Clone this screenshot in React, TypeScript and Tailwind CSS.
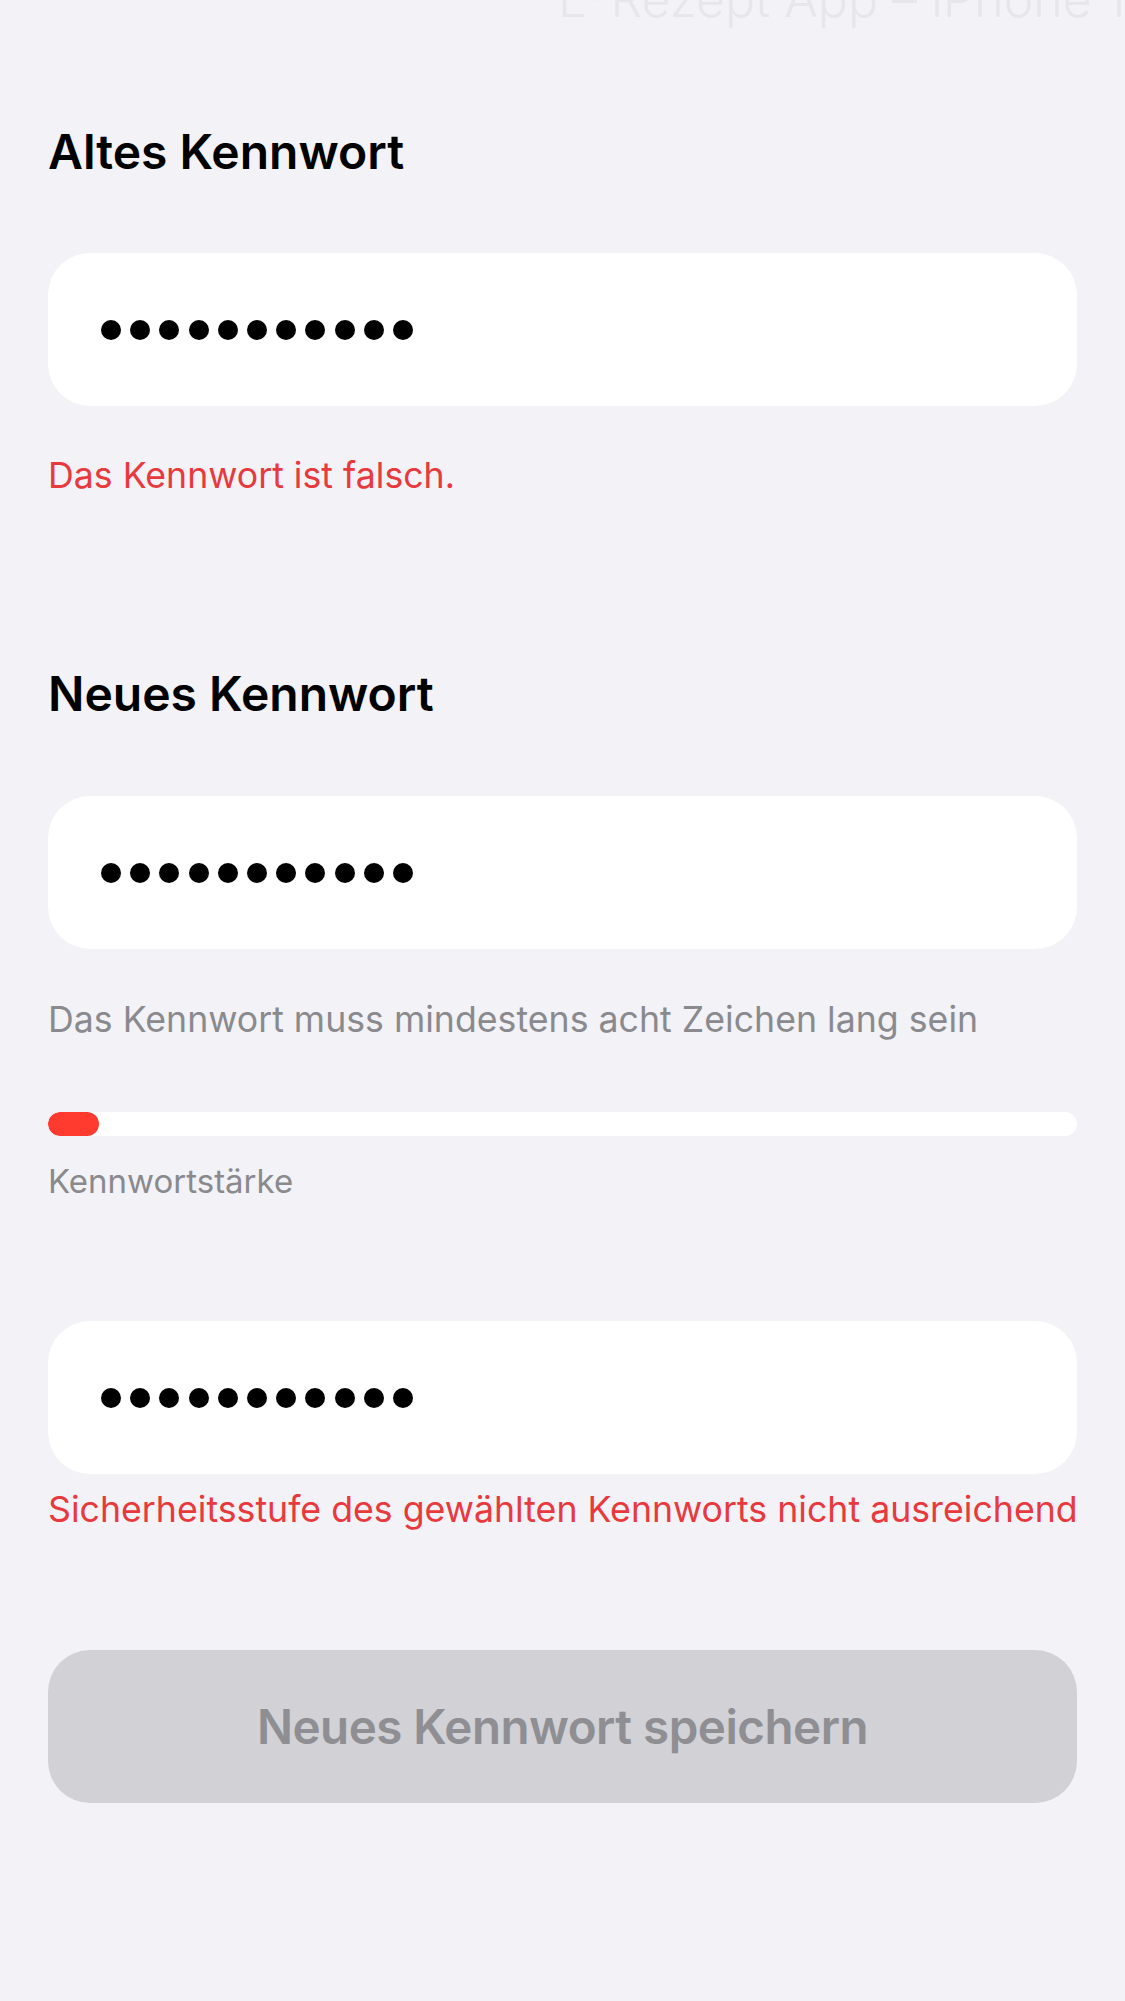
import React from 'react';

const font = { fontFamily: 'Inter, "Noto Sans", sans-serif' };

const Dots: React.FC = () => (
  <div className="flex items-center gap-[9.2px]">
    {Array.from({ length: 11 }).map((_, i) => (
      <span key={i} className="block w-[20px] h-[20px] rounded-full bg-black" />
    ))}
  </div>
);

const PasswordField: React.FC<{ className?: string }> = ({ className = '' }) => (
  <div className={`h-[153px] bg-white rounded-[42px] pl-[53px] flex items-center ${className}`}>
    <Dots />
  </div>
);

export default function App() {
  return (
    <div className="relative min-h-[2001px] w-[1125px] bg-[#f2f2f7] overflow-hidden" style={font}>
      {/* watermark */}
      <div className="absolute left-[558px] top-[-31px] text-[50px] leading-[60px] font-light text-[#e6e6eb] whitespace-nowrap">
        E-Rezept App – iPhone 14
      </div>

      <div className="px-[48px] pt-[123px]">
        <h2 className="text-[48px] leading-[58px] font-semibold text-black">Altes Kennwort</h2>

        <PasswordField className="mt-[72px]" />

        <p className="mt-[48px] text-[35.7px] leading-[42px] text-[#e8393d]">Das Kennwort ist falsch.</p>

        <h2 className="mt-[169px] text-[48px] leading-[58px] font-semibold text-black">Neues Kennwort</h2>

        <PasswordField className="mt-[73px]" />

        <p className="mt-[49px] text-[35.7px] leading-[42px] text-[#8a8a8e]">
          Das Kennwort muss mindestens acht Zeichen lang sein
        </p>

        <div className="mt-[72px] h-[24px] bg-white rounded-full overflow-hidden">
          <div className="h-full w-[51px] bg-[#ff3b30] rounded-full" />
        </div>

        <p className="mt-[25px] text-[33px] leading-[40px] text-[#8a8a8e]">Kennwortstärke</p>

        <PasswordField className="mt-[120px]" />

        <p className="mt-[14px] text-[35.7px] leading-[42px] text-[#e8393d] whitespace-nowrap">
          Sicherheitsstufe des gewählten Kennworts nicht ausreichend
        </p>

        <button
          disabled
          className="mt-[120px] w-full h-[153px] bg-[#d1d1d6] rounded-[42px] flex items-center justify-center text-[47.5px] font-semibold text-[#8e8e93] tracking-[-0.5px]"
        >
          Neues Kennwort speichern
        </button>
      </div>
    </div>
  );
}
